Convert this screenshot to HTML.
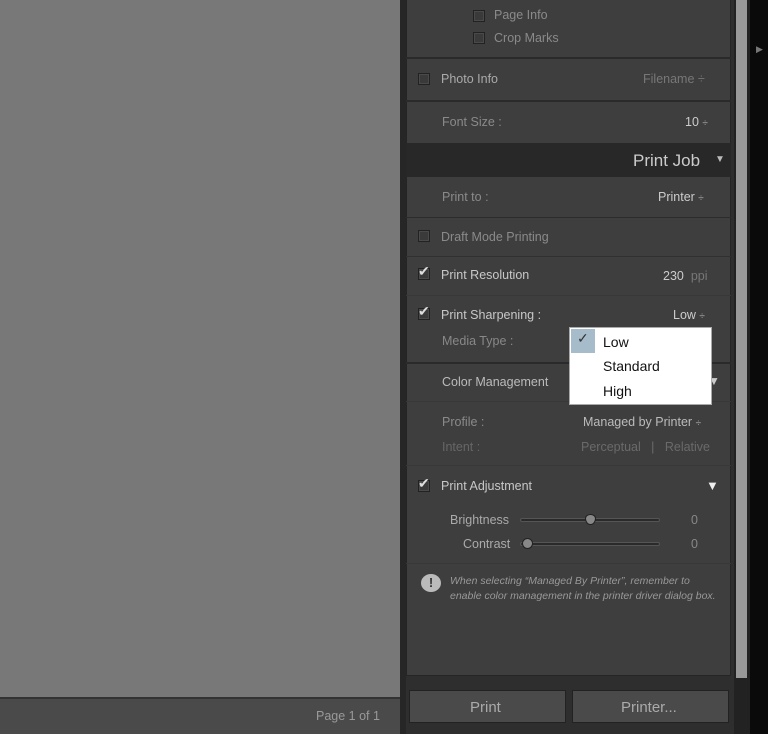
<!DOCTYPE html>
<html><head><style>
*{margin:0;padding:0;box-sizing:border-box}
body{width:768px;height:734px;background:#0e0e0e;position:relative;overflow:hidden;font-family:"Liberation Sans",sans-serif;font-size:12.5px;color:#c8c8c8}
.a{position:absolute}
.t{position:absolute;white-space:nowrap}
.cb{position:absolute;width:12px;height:12px;border:1px solid #222;background:#3a3a3a;box-shadow:inset 0 0 0 1px #4a4a4a}
.hl{position:absolute;left:406px;width:325px;height:2px;background:#2a2a2a}
.dim{color:#8a8a8a}
.chk{position:absolute;font-size:14px;color:#ddd}
</style></head><body>
<div class="a" style="left:0;top:0;width:400px;height:697px;background:#787878"></div>
<div class="a" style="left:0;top:697px;width:400px;height:37px;background:#4a4a4a;border-top:2px solid #333"></div>
<div class="t" style="left:316px;top:709px;color:#999;font-size:12.5px">Page 1 of 1</div>
<div class="a" style="left:400px;top:0;width:6px;height:734px;background:#262626"></div>
<div class="a" style="left:406px;top:0;width:328px;height:734px;background:#2e2e2e"></div>
<div class="a" style="left:406px;top:0;width:325px;height:676px;background:#3e3e3e;border:1px solid #252525;border-top:none"></div>
<div class="a" style="left:406px;top:143px;width:325px;height:34px;background:#282828"></div>
<div class="hl" style="top:57px"></div>
<div class="hl" style="top:100px"></div>
<div class="a" style="left:406px;top:217px;width:325px;height:1px;background:#2c2c2c"></div>
<div class="a" style="left:406px;top:256px;width:325px;height:1px;background:#303030"></div>
<div class="a" style="left:406px;top:295px;width:325px;height:1px;background:#383838"></div>
<div class="hl" style="top:362px"></div>
<div class="a" style="left:406px;top:401px;width:325px;height:1px;background:#383838"></div>
<div class="a" style="left:406px;top:465px;width:325px;height:1px;background:#383838"></div>
<div class="a" style="left:406px;top:563px;width:325px;height:1px;background:#383838"></div>

<div class="cb" style="left:473px;top:10px"></div><div class="t dim" style="left:494px;top:8px">Page Info</div>
<div class="cb" style="left:473px;top:32px"></div><div class="t dim" style="left:494px;top:31px">Crop Marks</div>
<div class="cb" style="left:418px;top:73px"></div><div class="t" style="left:441px;top:72px;color:#aaa">Photo Info</div>
<div class="t" style="left:643px;top:72px;color:#777">Filename ÷</div>
<div class="t dim" style="left:442px;top:115px">Font Size :</div><div class="t" style="left:685px;top:115px;color:#ccc">10 <span style="font-size:10px;color:#aaa">÷</span></div>
<div class="t" style="left:633px;top:151px;font-size:17px;color:#ccc">Print Job</div>
<div class="t" style="left:715px;top:154px;font-size:10px;color:#bbb">▼</div>
<div class="t dim" style="left:442px;top:190px">Print to :</div><div class="t" style="left:658px;top:190px;color:#ccc">Printer <span style="font-size:10px;color:#aaa">÷</span></div>
<div class="cb" style="left:418px;top:230px"></div><div class="t dim" style="left:441px;top:230px">Draft Mode Printing</div>
<div class="cb" style="left:418px;top:268px"></div><div class="chk" style="left:418px;top:263px">✔</div><div class="t" style="left:441px;top:268px">Print Resolution</div>
<div class="t" style="left:663px;top:269px;color:#ccc">230 <span style="color:#777">&nbsp;ppi</span></div>
<div class="cb" style="left:418px;top:308px"></div><div class="chk" style="left:418px;top:303px">✔</div><div class="t" style="left:441px;top:308px">Print Sharpening :</div>
<div class="t" style="left:673px;top:308px;color:#ccc">Low <span style="font-size:10px;color:#aaa">÷</span></div>
<div class="t" style="left:442px;top:334px;color:#888">Media Type :</div>
<div class="t" style="left:442px;top:375px;color:#bbb">Color Management</div>
<div class="t" style="left:708px;top:374px;font-size:12px;color:#ccc">▼</div>
<div class="t dim" style="left:442px;top:415px">Profile :</div><div class="t" style="left:583px;top:415px;color:#bbb">Managed by Printer <span style="font-size:10px;color:#aaa">÷</span></div>
<div class="t" style="left:442px;top:440px;color:#666">Intent :</div><div class="t" style="left:581px;top:440px;color:#6a6a6a">Perceptual &nbsp;&nbsp;|&nbsp;&nbsp; Relative</div>
<div class="cb" style="left:418px;top:480px"></div><div class="chk" style="left:418px;top:475px">✔</div><div class="t" style="left:441px;top:479px">Print Adjustment</div>
<div class="t" style="left:706px;top:478px;font-size:13px;color:#eee">▼</div>
<div class="t" style="left:450px;top:513px;color:#aaa">Brightness</div>
<div class="a" style="left:520px;top:518px;width:140px;height:4px;background:#2a2a2a;border:1px solid #555;border-radius:2px"></div>
<div class="a" style="left:585px;top:514px;width:11px;height:11px;background:#888;border:1px solid #222;border-radius:50% 50% 50% 50%/40% 40% 60% 60%"></div>
<div class="t" style="left:691px;top:513px;color:#888">0</div>
<div class="t" style="left:463px;top:537px;color:#aaa">Contrast</div>
<div class="a" style="left:520px;top:542px;width:140px;height:4px;background:#2a2a2a;border:1px solid #555;border-radius:2px"></div>
<div class="a" style="left:522px;top:538px;width:11px;height:11px;background:#888;border:1px solid #222;border-radius:50%"></div>
<div class="t" style="left:691px;top:537px;color:#888">0</div>
<div class="a" style="left:421px;top:574px;width:20px;height:18px;border-radius:50%;background:#bbb;color:#333;font-weight:bold;font-size:13px;text-align:center;line-height:18px">!</div>
<div class="t" style="left:450px;top:574px;font-size:10.5px;font-style:italic;color:#999;line-height:15px">When selecting “Managed By Printer”, remember to<br>enable color management in the printer driver dialog box.</div>

<div class="a" style="left:569px;top:327px;width:143px;height:78px;background:#fff;border:1px solid #aaa"></div>
<div class="a" style="left:571px;top:329px;width:24px;height:24px;background:#a7bccb"></div>
<div class="t" style="left:577px;top:330px;color:#333;font-size:14px">✓</div>
<div class="t" style="left:603px;top:334px;color:#111;font-size:14px">Low</div>
<div class="t" style="left:603px;top:358px;color:#111;font-size:14px">Standard</div>
<div class="t" style="left:603px;top:383px;color:#111;font-size:14px">High</div>

<div class="a" style="left:409px;top:690px;width:157px;height:33px;background:#4a4a4a;border:1px solid #222"></div>
<div class="t" style="left:470px;top:699px;font-size:15px;color:#aaa">Print</div>
<div class="a" style="left:572px;top:690px;width:157px;height:33px;background:#4a4a4a;border:1px solid #222"></div>
<div class="t" style="left:621px;top:699px;font-size:15px;color:#aaa">Printer...</div>
<div class="a" style="left:734px;top:0;width:16px;height:734px;background:#222"></div>
<div class="a" style="left:736px;top:0;width:11px;height:678px;background:#999"></div>
<div class="a" style="left:750px;top:0;width:18px;height:734px;background:#0a0a0a"></div>
<div class="t" style="left:756px;top:44px;font-size:9px;color:#777">▶</div>
</body></html>
